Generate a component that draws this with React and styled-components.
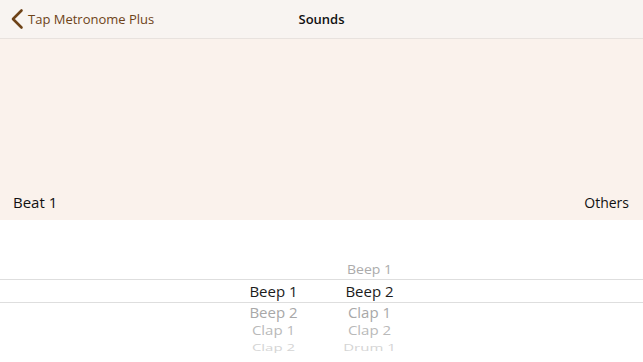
import React from "react";
import styled, { createGlobalStyle } from "styled-components";

const Global = createGlobalStyle`
  *, *::before, *::after { box-sizing: border-box; }
  html, body { margin: 0; padding: 0; background: #ffffff; }
  body { font-family: "Open Sans", "DejaVu Sans", sans-serif; }
`;

const Page = styled.div`
  width: 643px;
  height: 362px;
  display: flex;
  flex-direction: column;
  overflow: hidden;
  background: #ffffff;
`;

const NavBar = styled.div`
  height: 39px;
  flex: 0 0 39px;
  display: grid;
  grid-template-columns: 1fr auto 1fr;
  align-items: center;
  background: #f8f4f1;
  border-bottom: 1px solid #e8e2de;
  padding: 0 10px 0 10px;
`;

const BackButton = styled.div`
  display: flex;
  align-items: center;
  gap: 4px;
  color: #6e4318;
  font-size: 13px;
`;

const Title = styled.div`
  font-size: 13px;
  font-weight: 600;
  color: #111111;
`;

const Header = styled.div`
  flex: 0 0 181px;
  display: flex;
  align-items: flex-end;
  justify-content: space-between;
  padding: 0 14px 8px 13px;
  background: #faf2ec;
  color: #111111;
  font-size: 15px;
`;

const RightLabel = styled.span`
  font-size: 14px;
`;

const Picker = styled.div`
  flex: 1;
  display: flex;
  flex-direction: column;
  padding-top: 38px;
  overflow: hidden;
`;

const Row = styled.div`
  flex: 0 0 auto;
  display: grid;
  grid-template-columns: 96px 96px;
  justify-content: center;
  align-items: center;
  height: ${(p) => p.$h}px;
  color: ${(p) => p.$color};
  font-size: ${(p) => p.$size}px;
  border-top: ${(p) => (p.$selected ? "1px solid #dedede" : "none")};
  border-bottom: ${(p) => (p.$selected ? "1px solid #dedede" : "none")};
`;

const Cell = styled.div`
  text-align: center;
  line-height: 1;
  transform: scaleY(${(p) => p.$sy});
`;

const rows = [
  { a: "", b: "Beep 1", h: 21, color: "#ababab", size: 14, sy: 0.92 },
  { a: "Beep 1", b: "Beep 2", h: 24, color: "#1c1c1c", size: 15, sy: 1, selected: true },
  { a: "Beep 2", b: "Clap 1", h: 19, color: "#a8a8a8", size: 15, sy: 0.95 },
  { a: "Clap 1", b: "Clap 2", h: 17, color: "#b9b9b9", size: 15, sy: 0.8 },
  { a: "Clap 2", b: "Drum 1", h: 17, color: "#d4d4d4", size: 15, sy: 0.58 },
];

const Chevron = () => (
  <svg width="14" height="22" viewBox="0 0 14 22">
    <path d="M11.5 2.5 L3 11 L11.5 19.5" fill="none" stroke="#6e4318" strokeWidth="2.6" strokeLinecap="round" strokeLinejoin="round" />
  </svg>
);

export default function App() {
  return (
    <Page>
      <Global />
      <NavBar>
        <BackButton>
          <Chevron />
          <span>Tap Metronome Plus</span>
        </BackButton>
        <Title>Sounds</Title>
        <div />
      </NavBar>
      <Header>
        <span>Beat 1</span>
        <RightLabel>Others</RightLabel>
      </Header>
      <Picker>
        {rows.map((r, i) => (
          <Row key={i} $h={r.h} $color={r.color} $size={r.size} $selected={r.selected}>
            <Cell $sy={r.sy}>{r.a}</Cell>
            <Cell $sy={r.sy}>{r.b}</Cell>
          </Row>
        ))}
      </Picker>
    </Page>
  );
}
